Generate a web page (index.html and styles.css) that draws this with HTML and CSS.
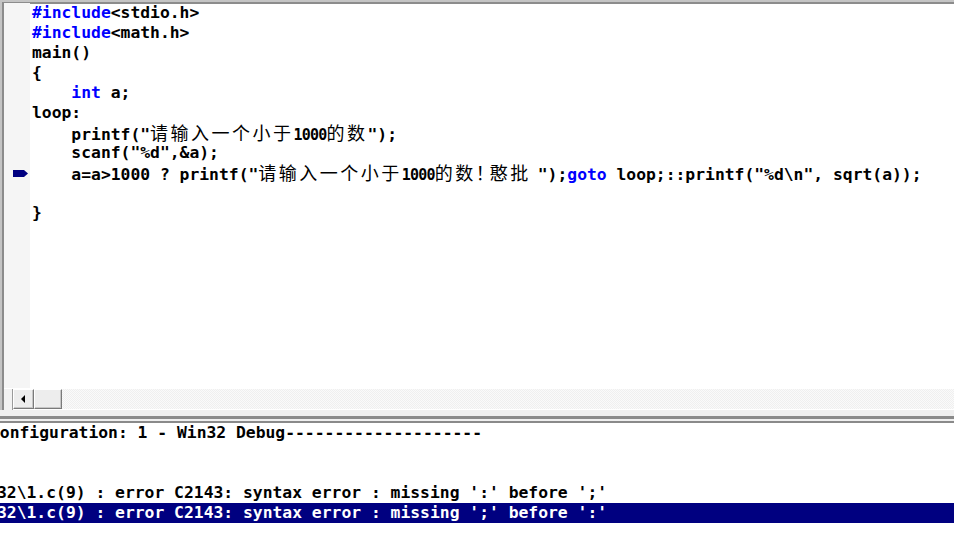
FILE: index.html
```html
<!DOCTYPE html>
<html lang="zh">
<head>
    <meta charset="UTF-8">
    <title>1.c</title>
    <link rel="stylesheet" href="styles.css">
</head>
<body>
<div class="editor">
    <div class="edit-body">
        <div class="gutter">
            <div class="g-row"></div>
            <div class="g-row"></div>
            <div class="g-row"></div>
            <div class="g-row"></div>
            <div class="g-row"></div>
            <div class="g-row"></div>
            <div class="g-row"></div>
            <div class="g-row"></div>
            <div class="g-row">
                <svg class="marker" width="15" height="7" viewBox="0 0 15 7"><path d="M0 0H11L15 3.5L11 7H0Z" fill="#000080"/></svg>
            </div>
        </div>
        <div class="code">
            <div class="line"><span class="kw">#include</span>&lt;stdio.h&gt;</div>
            <div class="line"><span class="kw">#include</span>&lt;math.h&gt;</div>
            <div class="line">main()</div>
            <div class="line">{</div>
            <div class="line">    <span class="kw">int</span> a;</div>
            <div class="line">loop:</div>
            <div class="line">    printf("<span class="cjk">请输入一个小于</span><span class="num">1000</span><span class="cjk">的数</span>");</div>
            <div class="line">    scanf("%d",&amp;a);</div>
            <div class="line">    a=a&gt;1000 ? printf("<span class="cjk">请输入一个小于</span><span class="num">1000</span><span class="cjk">的数</span><span class="cjk bang">！</span><span class="cjk tail">憨批</span>");<span class="kw">goto</span> loop;::printf("%d\n", sqrt(a));</div>
            <div class="line"> </div>
            <div class="line">}</div>
        </div>
    </div>
    <div class="hscroll">
        <div class="hs-corner"></div>
        <div class="hs-btn">
            <svg width="5" height="8" viewBox="0 0 5 8"><path d="M4 0V8L0 4Z" fill="#000"/></svg>
        </div>
        <div class="hs-thumb"></div>
        <div class="hs-track"></div>
    </div>
</div>
<div class="splitter"></div>
<div class="output">
    <div class="line shift-c">Configuration: 1 - Win32 Debug--------------------</div>
    <div class="line"> </div>
    <div class="line"> </div>
    <div class="line shift-e">32\1.c(9) : error C2143: syntax error : missing ':' before ';'</div>
    <div class="line shift-e selected">32\1.c(9) : error C2143: syntax error : missing ';' before ':'</div>
</div>
</body>
</html>
```

FILE: styles.css
```css
body {
    margin: 0;
    background-color: #ffffff;
    color: #000000;
    font-family: "DejaVu Sans Mono", monospace;
    font-weight: bold;
    font-size: 16.35px;
    overflow: hidden;
}

.editor {
    height: 410px;
    padding: 4px 0 0 4px;
    box-sizing: border-box;
    box-shadow: inset 2px 2px #c4c4c4, inset 4px 4px #8c8c8c;
    display: flex;
    flex-direction: column;
}

.edit-body {
    height: 384px;
    display: flex;
}

.gutter {
    width: 26px;
    background-color: #f5f5f5;
    margin-top: -1px;
}

.g-row {
    height: 20px;
    display: flex;
    align-items: center;
}

.marker {
    margin-left: 9px;
}

.code {
    flex: 1;
    padding-left: 2px;
    margin-top: -1px;
}

.line {
    height: 20px;
    line-height: 20px;
    white-space: pre;
}

.kw {
    color: #0000ff;
}

.cjk {
    font-family: "Noto Sans CJK SC", sans-serif;
    font-weight: normal;
    font-size: 18px;
    line-height: 18px;
    letter-spacing: 2.5px;
}

.cjk.bang {
    letter-spacing: -4px;
}

.cjk.tail {
    margin-right: 7px;
}

.num {
    font-size: 15px;
    letter-spacing: -0.8px;
}

.hscroll {
    height: 22px;
    display: flex;
    padding-top: 1px;
    box-sizing: border-box;
}

.hs-corner {
    width: 8px;
    background-color: #f2f2f2;
    border-right: 1px solid #9a9a9a;
}

.hs-btn, .hs-thumb {
    height: 20px;
    box-sizing: border-box;
    background-color: #ededed;
    border: 1px solid;
    border-color: #ffffff #7a7a7a #7a7a7a #ffffff;
    box-shadow: inset -1px -1px #c6c6c6;
}

.hs-btn {
    width: 21px;
    display: flex;
    align-items: center;
    justify-content: center;
}

.hs-thumb {
    width: 28px;
}

.hs-track {
    flex: 1;
    height: 20px;
    background-color: #f6f6f6;
    background-image: repeating-conic-gradient(#efefef 0 25%, #fafafa 0 50%);
    background-size: 2px 2px;
}

.splitter {
    height: 13px;
    background: linear-gradient(to bottom,
        #efefef 0, #efefef 6px,
        #8a8a8a 6px, #8a8a8a 9px,
        #efefef 9px, #efefef 11px,
        #8a8a8a 11px, #8a8a8a 13px);
}

.output {
    overflow: hidden;
}

.shift-c {
    margin-left: -10px;
}

.shift-e {
    margin-left: -3px;
}

.selected {
    background-color: #000080;
    color: #ffffff;
}
```
